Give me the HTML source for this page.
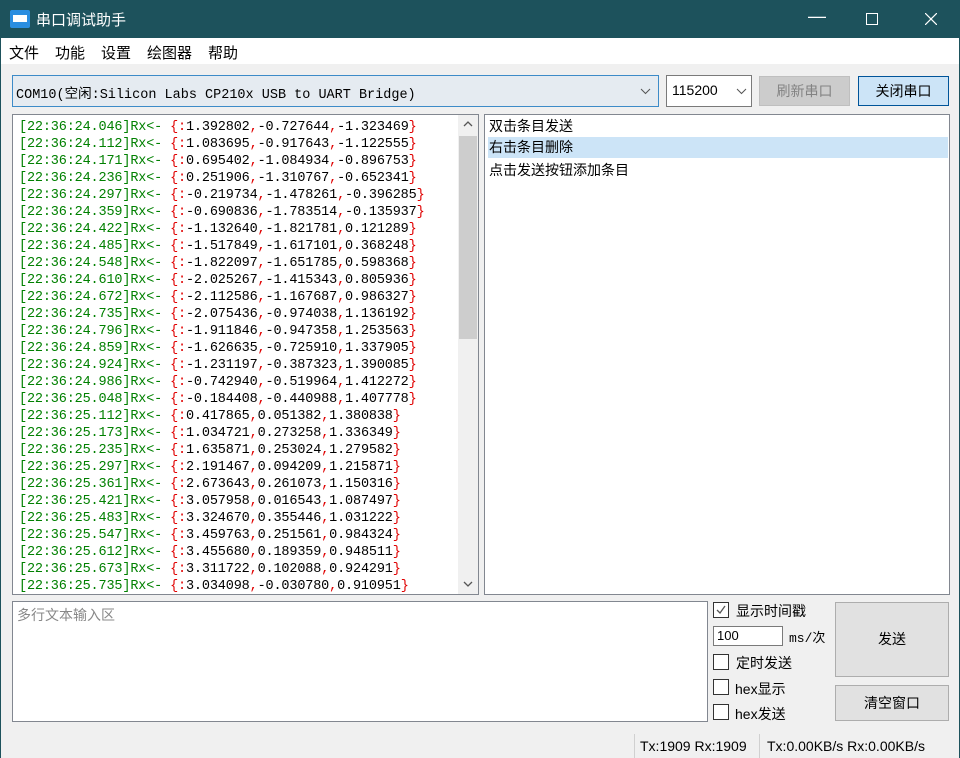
<!DOCTYPE html>
<html><head><meta charset="utf-8"><style>
*{margin:0;padding:0;box-sizing:border-box}
body{width:960px;height:758px;background:#f0f0f0;position:relative;overflow:hidden;font-family:"Liberation Sans","Noto Sans CJK SC",sans-serif;font-size:14px;color:#000}
.a{position:absolute}
.title{left:0;top:0;width:960px;height:38px;background:#1d525c;color:#fff}
.menu{left:0;top:38px;width:960px;height:26px;background:#fff}
.menu span{position:absolute;top:4px;font-size:15px}
.log{left:12px;top:114px;width:467px;height:481px;background:#fff;border:1px solid #828790;overflow:hidden}
.log pre{font-family:"Liberation Mono","Noto Sans CJK SC",monospace;font-size:13.5px;line-height:17px;position:absolute;left:6px;top:4px;color:#000;letter-spacing:-0.15px}
.g{color:#008000}.r{color:#e00000}
.sb{position:absolute;right:0;top:0;width:20px;height:479px;background:#f0f0f0}
.list{left:484px;top:114px;width:466px;height:481px;background:#fff;border:1px solid #828790}
.list div{position:absolute;left:3px;font-size:14px;height:21px;line-height:21px;width:460px;padding-left:1px}
.btn{border:1px solid #adadad;background:#e1e1e1;text-align:center;font-size:14px}
.cb{position:absolute;width:16px;height:16px;border:1px solid #333;background:#fff}
.lbl{position:absolute;font-size:14px}
</style></head><body>
<div class="a title">
<svg class="a" style="left:10px;top:10px" width="20" height="18"><rect x="0" y="0" width="20" height="18" rx="2" fill="#2a8ee0"/><rect x="3" y="5" width="14" height="7" fill="#fff"/></svg>
<span class="a" style="left:36px;top:9px;font-size:15px">串口调试助手</span>
<span class="a" style="left:808px;top:6px;font-size:18px">&#8212;</span>
<svg class="a" style="left:866px;top:13px" width="12" height="12"><rect x="0.5" y="0.5" width="11" height="11" fill="none" stroke="#fff"/></svg>
<svg class="a" style="left:925px;top:13px" width="12" height="12"><path d="M0 0L12 12M12 0L0 12" stroke="#fff" stroke-width="1.2"/></svg>
</div>
<div class="a menu"><span style="left:9px">文件</span><span style="left:55px">功能</span><span style="left:101px">设置</span><span style="left:147px">绘图器</span><span style="left:208px">帮助</span></div>
<div class="a" style="left:12px;top:75px;width:647px;height:32px;background:#e5ebf1;border:1px solid #3d8bc8"><span class="a" style="left:3px;top:6px;font-family:'Liberation Mono','Noto Sans CJK SC',monospace;font-size:13.5px">COM10(空闲:Silicon Labs CP210x USB to UART Bridge)</span><svg class="a" style="left:627px;top:12px" width="11" height="7"><path d="M1 1L5.5 5.5L10 1" fill="none" stroke="#555"/></svg></div>
<div class="a" style="left:666px;top:75px;width:86px;height:32px;background:#fff;border:1px solid #7a7a7a"><span class="a" style="left:5px;top:6px;font-size:14px">115200</span><svg class="a" style="left:69px;top:12px" width="11" height="7"><path d="M1 1L5.5 5.5L10 1" fill="none" stroke="#555"/></svg></div>
<div class="a btn" style="left:759px;top:76px;width:91px;height:30px;background:#cccccc;border-color:#bfbfbf;color:#838383;line-height:28px">刷新串口</div>
<div class="a btn" style="left:858px;top:76px;width:91px;height:30px;background:#cce4f7;border-color:#005499;line-height:28px">关闭串口</div>
<div class="a log"><pre><span class="g">[22:36:24.046]Rx&lt;- </span><span class="r">{:</span>1.392802<span class="r">,</span>-0.727644<span class="r">,</span>-1.323469<span class="r">}</span>
<span class="g">[22:36:24.112]Rx&lt;- </span><span class="r">{:</span>1.083695<span class="r">,</span>-0.917643<span class="r">,</span>-1.122555<span class="r">}</span>
<span class="g">[22:36:24.171]Rx&lt;- </span><span class="r">{:</span>0.695402<span class="r">,</span>-1.084934<span class="r">,</span>-0.896753<span class="r">}</span>
<span class="g">[22:36:24.236]Rx&lt;- </span><span class="r">{:</span>0.251906<span class="r">,</span>-1.310767<span class="r">,</span>-0.652341<span class="r">}</span>
<span class="g">[22:36:24.297]Rx&lt;- </span><span class="r">{:</span>-0.219734<span class="r">,</span>-1.478261<span class="r">,</span>-0.396285<span class="r">}</span>
<span class="g">[22:36:24.359]Rx&lt;- </span><span class="r">{:</span>-0.690836<span class="r">,</span>-1.783514<span class="r">,</span>-0.135937<span class="r">}</span>
<span class="g">[22:36:24.422]Rx&lt;- </span><span class="r">{:</span>-1.132640<span class="r">,</span>-1.821781<span class="r">,</span>0.121289<span class="r">}</span>
<span class="g">[22:36:24.485]Rx&lt;- </span><span class="r">{:</span>-1.517849<span class="r">,</span>-1.617101<span class="r">,</span>0.368248<span class="r">}</span>
<span class="g">[22:36:24.548]Rx&lt;- </span><span class="r">{:</span>-1.822097<span class="r">,</span>-1.651785<span class="r">,</span>0.598368<span class="r">}</span>
<span class="g">[22:36:24.610]Rx&lt;- </span><span class="r">{:</span>-2.025267<span class="r">,</span>-1.415343<span class="r">,</span>0.805936<span class="r">}</span>
<span class="g">[22:36:24.672]Rx&lt;- </span><span class="r">{:</span>-2.112586<span class="r">,</span>-1.167687<span class="r">,</span>0.986327<span class="r">}</span>
<span class="g">[22:36:24.735]Rx&lt;- </span><span class="r">{:</span>-2.075436<span class="r">,</span>-0.974038<span class="r">,</span>1.136192<span class="r">}</span>
<span class="g">[22:36:24.796]Rx&lt;- </span><span class="r">{:</span>-1.911846<span class="r">,</span>-0.947358<span class="r">,</span>1.253563<span class="r">}</span>
<span class="g">[22:36:24.859]Rx&lt;- </span><span class="r">{:</span>-1.626635<span class="r">,</span>-0.725910<span class="r">,</span>1.337905<span class="r">}</span>
<span class="g">[22:36:24.924]Rx&lt;- </span><span class="r">{:</span>-1.231197<span class="r">,</span>-0.387323<span class="r">,</span>1.390085<span class="r">}</span>
<span class="g">[22:36:24.986]Rx&lt;- </span><span class="r">{:</span>-0.742940<span class="r">,</span>-0.519964<span class="r">,</span>1.412272<span class="r">}</span>
<span class="g">[22:36:25.048]Rx&lt;- </span><span class="r">{:</span>-0.184408<span class="r">,</span>-0.440988<span class="r">,</span>1.407778<span class="r">}</span>
<span class="g">[22:36:25.112]Rx&lt;- </span><span class="r">{:</span>0.417865<span class="r">,</span>0.051382<span class="r">,</span>1.380838<span class="r">}</span>
<span class="g">[22:36:25.173]Rx&lt;- </span><span class="r">{:</span>1.034721<span class="r">,</span>0.273258<span class="r">,</span>1.336349<span class="r">}</span>
<span class="g">[22:36:25.235]Rx&lt;- </span><span class="r">{:</span>1.635871<span class="r">,</span>0.253024<span class="r">,</span>1.279582<span class="r">}</span>
<span class="g">[22:36:25.297]Rx&lt;- </span><span class="r">{:</span>2.191467<span class="r">,</span>0.094209<span class="r">,</span>1.215871<span class="r">}</span>
<span class="g">[22:36:25.361]Rx&lt;- </span><span class="r">{:</span>2.673643<span class="r">,</span>0.261073<span class="r">,</span>1.150316<span class="r">}</span>
<span class="g">[22:36:25.421]Rx&lt;- </span><span class="r">{:</span>3.057958<span class="r">,</span>0.016543<span class="r">,</span>1.087497<span class="r">}</span>
<span class="g">[22:36:25.483]Rx&lt;- </span><span class="r">{:</span>3.324670<span class="r">,</span>0.355446<span class="r">,</span>1.031222<span class="r">}</span>
<span class="g">[22:36:25.547]Rx&lt;- </span><span class="r">{:</span>3.459763<span class="r">,</span>0.251561<span class="r">,</span>0.984324<span class="r">}</span>
<span class="g">[22:36:25.612]Rx&lt;- </span><span class="r">{:</span>3.455680<span class="r">,</span>0.189359<span class="r">,</span>0.948511<span class="r">}</span>
<span class="g">[22:36:25.673]Rx&lt;- </span><span class="r">{:</span>3.311722<span class="r">,</span>0.102088<span class="r">,</span>0.924291<span class="r">}</span>
<span class="g">[22:36:25.735]Rx&lt;- </span><span class="r">{:</span>3.034098<span class="r">,</span>-0.030780<span class="r">,</span>0.910951<span class="r">}</span></pre>
<div class="sb"><svg class="a" style="left:5px;top:6px" width="10" height="6"><path d="M1 5L5 1L9 5" fill="none" stroke="#555" stroke-width="1.3"/></svg><div class="a" style="left:1px;top:21px;width:18px;height:203px;background:#cdcdcd"></div><svg class="a" style="left:5px;top:466px" width="10" height="6"><path d="M1 1L5 5L9 1" fill="none" stroke="#555" stroke-width="1.3"/></svg></div>
</div>
<div class="a list"><div style="top:1px">双击条目发送</div><div style="top:22px;background:#cce4f7">右击条目删除</div><div style="top:45px">点击发送按钮添加条目</div></div>
<div class="a" style="left:12px;top:601px;width:696px;height:121px;background:#fff;border:1px solid #828790"><span class="a" style="left:4px;top:3px;color:#888">多行文本输入区</span></div>
<div class="cb" style="left:713px;top:602px"><svg width="14" height="14" class="a" style="left:0;top:0"><path d="M3 7L6 10L11 3" fill="none" stroke="#555" stroke-width="1.3"/></svg></div>
<span class="lbl" style="left:736px;top:601px">显示时间戳</span>
<div class="a" style="left:713px;top:626px;width:70px;height:20px;background:#fff;border:1px solid #7a7a7a"><span class="a" style="left:3px;top:1px;font-size:13px">100</span></div>
<span class="lbl" style="left:789px;top:627px;font-family:'Liberation Mono','Noto Sans CJK SC',monospace;font-size:13px">ms/次</span>
<div class="cb" style="left:713px;top:654px"></div><span class="lbl" style="left:736px;top:653px">定时发送</span>
<div class="cb" style="left:713px;top:679px"></div><span class="lbl" style="left:735px;top:679px">hex显示</span>
<div class="cb" style="left:713px;top:704px"></div><span class="lbl" style="left:735px;top:704px">hex发送</span>
<div class="a btn" style="left:835px;top:602px;width:114px;height:75px;line-height:73px">发送</div>
<div class="a btn" style="left:835px;top:685px;width:114px;height:36px;line-height:34px">清空窗口</div>
<div class="a" style="left:634px;top:734px;width:1px;height:24px;background:#d0d0d0"></div>
<div class="a" style="left:759px;top:734px;width:1px;height:24px;background:#d0d0d0"></div>
<span class="lbl" style="left:640px;top:738px;font-size:14px">Tx:1909 Rx:1909</span>
<span class="lbl" style="left:767px;top:738px;font-size:14px">Tx:0.00KB/s Rx:0.00KB/s</span>
<div class="a" style="left:0;top:38px;width:1px;height:720px;background:#1d525c"></div>
<div class="a" style="left:959px;top:38px;width:1px;height:720px;background:#1d525c"></div>
</body></html>
